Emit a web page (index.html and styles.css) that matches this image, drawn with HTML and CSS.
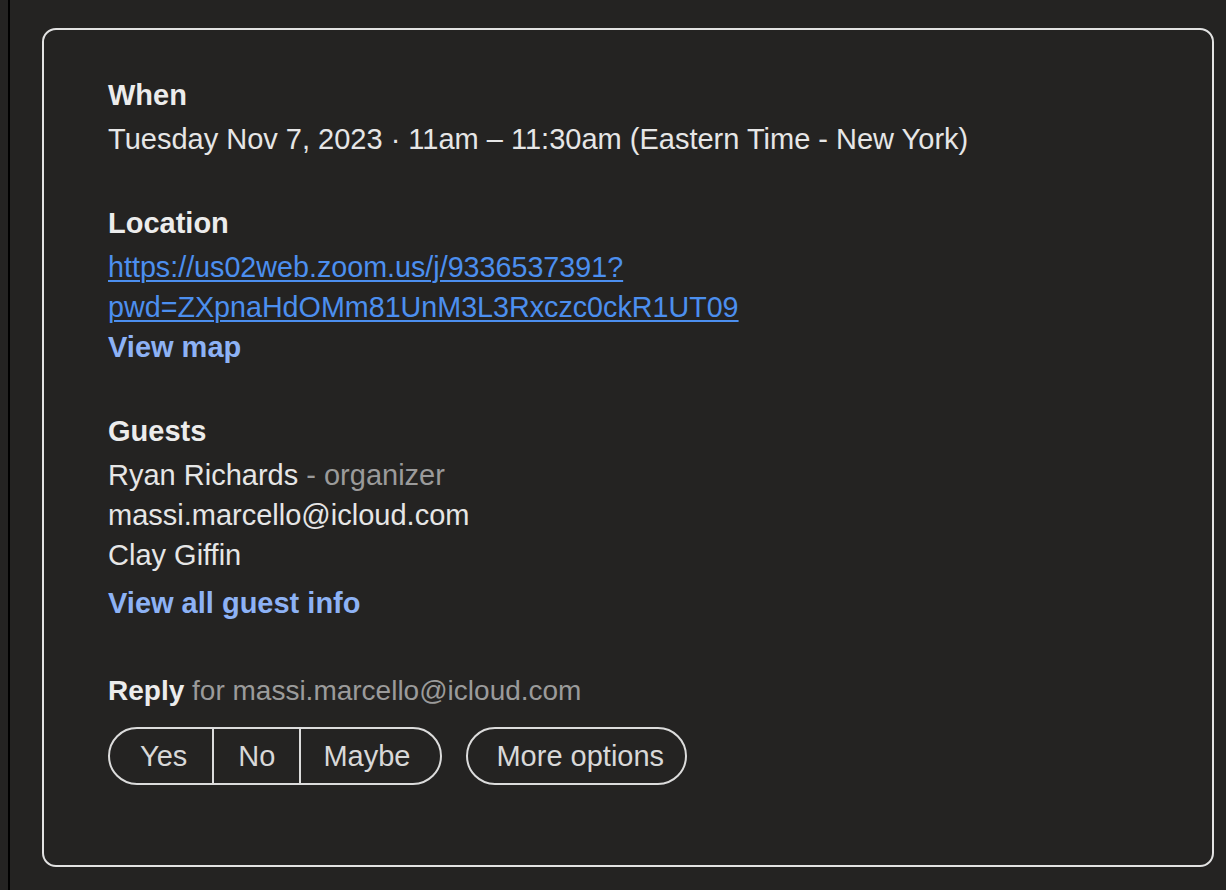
FILE: index.html
```html
<!DOCTYPE html>
<html>
<head>
<meta charset="utf-8">
<link rel="stylesheet" href="styles.css">
</head>
<body>
<div class="page">
  <div class="rail"></div>
  <div class="card">
    <section class="block">
      <h3 class="label">When</h3>
      <div class="line">Tuesday Nov 7, 2023 · 11am – 11:30am (Eastern Time - New York)</div>
    </section>
    <section class="block">
      <h3 class="label">Location</h3>
      <a class="url" href="#">https://us02web.zoom.us/j/9336537391?<br>pwd=ZXpnaHdOMm81UnM3L3Rxczc0ckR1UT09</a>
      <a class="action" href="#">View map</a>
    </section>
    <section class="block">
      <h3 class="label">Guests</h3>
      <div class="line">Ryan Richards <span class="muted">- organizer</span></div>
      <div class="line">massi.marcello@icloud.com</div>
      <div class="line">Clay Giffin</div>
      <a class="action action-gap" href="#">View all guest info</a>
    </section>
    <section class="reply">
      <div class="line reply-line"><strong>Reply</strong> <span class="muted">for massi.marcello@icloud.com</span></div>
      <div class="buttons">
        <div class="group">
          <button class="seg seg-yes">Yes</button>
          <button class="seg seg-no">No</button>
          <button class="seg seg-maybe">Maybe</button>
        </div>
        <button class="pill">More options</button>
      </div>
    </section>
  </div>
</div>
</body>
</html>
```
FILE: styles.css
```css
html, body {
  margin: 0;
  padding: 0;
  background: #242322;
}
body {
  font-family: "Liberation Sans", Arial, Helvetica, sans-serif;
  color: #e6e6e6;
  font-size: 29px;
  line-height: 40px;
}
.page {
  display: flex;
  align-items: flex-start;
  height: 890px;
}
.rail {
  width: 2px;
  height: 890px;
  margin-left: 8px;
  background: #000;
  flex: none;
}
.card {
  margin: 28px 12px 0 32px;
  flex: 1;
  height: 839px;
  box-sizing: border-box;
  border: 2px solid #e2e2e2;
  border-radius: 14px;
  padding: 45px 64px 0 64px;
}
.block {
  margin-bottom: 44px;
}
.label {
  margin: 0 0 4px 0;
  font-size: 29px;
  font-weight: bold;
  line-height: 40px;
  color: #ececec;
}
.line {
  line-height: 40px;
}
.muted {
  color: #9b9b9b;
}
.url {
  display: block;
  font-size: 28.7px;
  color: #4c8fef;
  text-decoration: underline;
  text-decoration-thickness: 2px;
  text-underline-offset: 3px;
}
.action {
  display: block;
  color: #8db2f5;
  font-weight: bold;
  text-decoration: none;
  width: max-content;
}
.action-gap {
  margin-top: 8px;
}
.reply {
  margin-top: 48px;
}
.reply-line {
  font-size: 28px;
}
.reply strong {
  color: #ececec;
}
.buttons {
  display: flex;
  gap: 24px;
  margin-top: 16px;
}
.group {
  display: flex;
  border: 2px solid #dcdcdc;
  border-radius: 30px;
  height: 58px;
  box-sizing: border-box;
  overflow: hidden;
}
.seg, .pill {
  font-family: inherit;
  font-size: 29px;
  color: #d8d8d8;
  background: transparent;
  border: none;
  padding: 0;
  height: 100%;
  cursor: pointer;
  white-space: nowrap;
}
.seg {
  border-left: 2px solid #dcdcdc;
}
.seg-yes {
  border-left: none;
  padding: 0 25px 0 30px;
}
.seg-no {
  padding: 0 24px 0 24px;
}
.seg-maybe {
  padding: 0 30px 0 22px;
}
.pill {
  height: 58px;
  box-sizing: border-box;
  border: 2px solid #dcdcdc;
  border-radius: 30px;
  padding: 0 21px 0 28px;
}
```
